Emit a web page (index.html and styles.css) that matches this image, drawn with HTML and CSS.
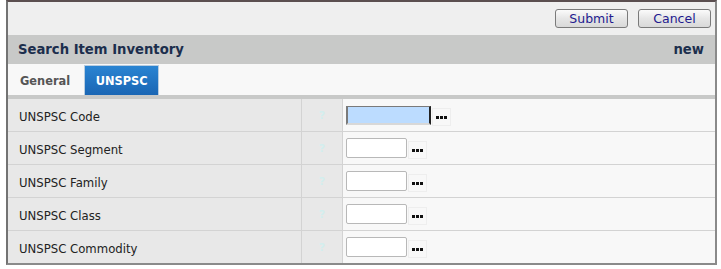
FILE: index.html
```html
<!DOCTYPE html>
<html lang="en">
<head>
  <meta charset="UTF-8">
  <title>Search Item Inventory</title>
  <link rel="stylesheet" href="styles.css">
</head>
<body>
  <div class="window">
    <!-- top toolbar -->
    <div class="toolbar">
      <button class="btn">Submit</button>
      <button class="btn">Cancel</button>
    </div>

    <div class="title-bar">
      <span class="title">Search Item Inventory</span>
      <span class="mode">new</span>
    </div>

    <div class="tabs">
      <span class="tab">General</span>
      <span class="tab active">UNSPSC</span>
    </div>

    <div class="fields">
      <div class="row">
        <div class="label">UNSPSC Code</div>
        <div class="help">?</div>
        <div class="value">
          <input type="text" class="field focused">
          <span class="lookup"><i></i><i></i><i></i></span>
        </div>
      </div>
      <div class="row">
        <div class="label">UNSPSC Segment</div>
        <div class="help">?</div>
        <div class="value">
          <input type="text" class="field">
          <span class="lookup"><i></i><i></i><i></i></span>
        </div>
      </div>
      <div class="row">
        <div class="label">UNSPSC Family</div>
        <div class="help">?</div>
        <div class="value">
          <input type="text" class="field">
          <span class="lookup"><i></i><i></i><i></i></span>
        </div>
      </div>
      <div class="row">
        <div class="label">UNSPSC Class</div>
        <div class="help">?</div>
        <div class="value">
          <input type="text" class="field">
          <span class="lookup"><i></i><i></i><i></i></span>
        </div>
      </div>
      <div class="row last">
        <div class="label">UNSPSC Commodity</div>
        <div class="help">?</div>
        <div class="value">
          <input type="text" class="field">
          <span class="lookup"><i></i><i></i><i></i></span>
        </div>
      </div>
    </div>
  </div>
</body>
</html>
```

FILE: styles.css
```css
* { margin: 0; padding: 0; box-sizing: border-box; }
body {
  font-family: "DejaVu Sans", Verdana, sans-serif;
  background: #fff;
  padding: 0 4px 0 6px;
}
.window {
  width: 711px;
  border-top: 2px solid #5b4f50;
  border-left: 2px solid #737373;
  border-right: 2px solid #8a8a8a;
  border-bottom: 2px solid #8a8a8a;
  background: #f8f8f8;
}

/* toolbar with buttons */
.toolbar {
  height: 33px;
  background: #efefef;
  display: flex;
  justify-content: flex-end;
  align-items: flex-start;
  padding: 7px 4px 0 0;
  gap: 10px;
}
.btn {
  width: 73px;
  height: 19px;
  font-family: "DejaVu Sans", Verdana, sans-serif;
  font-size: 12.5px;
  color: #231a8f;
  border: 1px solid #7a7a7a;
  border-radius: 3px;
  background: linear-gradient(#fbfbfb, #e6e6e6 50%, #d9d9d9);
  line-height: 16px;
}

.title-bar {
  height: 29px;
  background: #c8c9c8;
  display: flex;
  justify-content: space-between;
  align-items: center;
  padding: 0 11px 0 10px;
  font-weight: bold;
  font-size: 13.2px;
  color: #1c2e4d;
}

.tabs {
  height: 31px;
  display: flex;
  align-items: stretch;
  padding-top: 1px;
  background: #f8f8f8;
}
.tab {
  font-size: 11.4px;
  font-weight: bold;
  color: #555;
  padding: 2px 12px 0 12px;
  display: flex;
  align-items: center;
}
.tab.active {
  width: 75px;
  margin-left: 2px;
  padding: 0;
  justify-content: center;
  color: #fff;
  background: linear-gradient(#2a84d2, #1a66b4);
  border: 1px solid #b8cde0;
  border-bottom: none;
}

.fields {
  border-top: 4px solid #c8c9c8;
}
.row {
  display: grid;
  grid-template-columns: 294px 41px 1fr;
  height: 33px;
  border-bottom: 1px solid #d3d3d3;
}
.row.last { border-bottom: none; height: 32px; }
.label {
  background: #e8e8e8;
  border-right: 1px solid #d3d3d3;
  font-size: 11.7px;
  color: #222;
  padding: 3px 0 0 11px;
  display: flex;
  align-items: center;
}
.help {
  background: #e8e8e8;
  border-right: 1px solid #d3d3d3;
  color: #d3eeee;
  font-size: 11px;
  font-weight: bold;
  display: flex;
  align-items: center;
  justify-content: center;
}
.value {
  display: flex;
  align-items: center;
  padding-left: 3px;
  gap: 1px;
}
.field {
  width: 61px;
  height: 20px;
  border: 1px solid #b8b8b8;
  border-radius: 2px;
  background: #fff;
}
.field.focused {
  width: 85px;
  height: 19px;
  background: #bcdcff;
  border-width: 1px 2px 2px 2px;
  border-style: solid;
  border-color: #7a7a7a #222 #d8d8d8 #7a7a7a;
  border-radius: 0;
  margin-top: 0;
}
.lookup {
  width: 19px;
  height: 18px;
  border: 1px solid #eee;
  background: #f8f8f8;
  display: flex;
  align-items: center;
  justify-content: center;
  gap: 1px;
  margin-top: 4px;
}
.lookup i {
  width: 3px;
  height: 3px;
  background: #111;
}
```
